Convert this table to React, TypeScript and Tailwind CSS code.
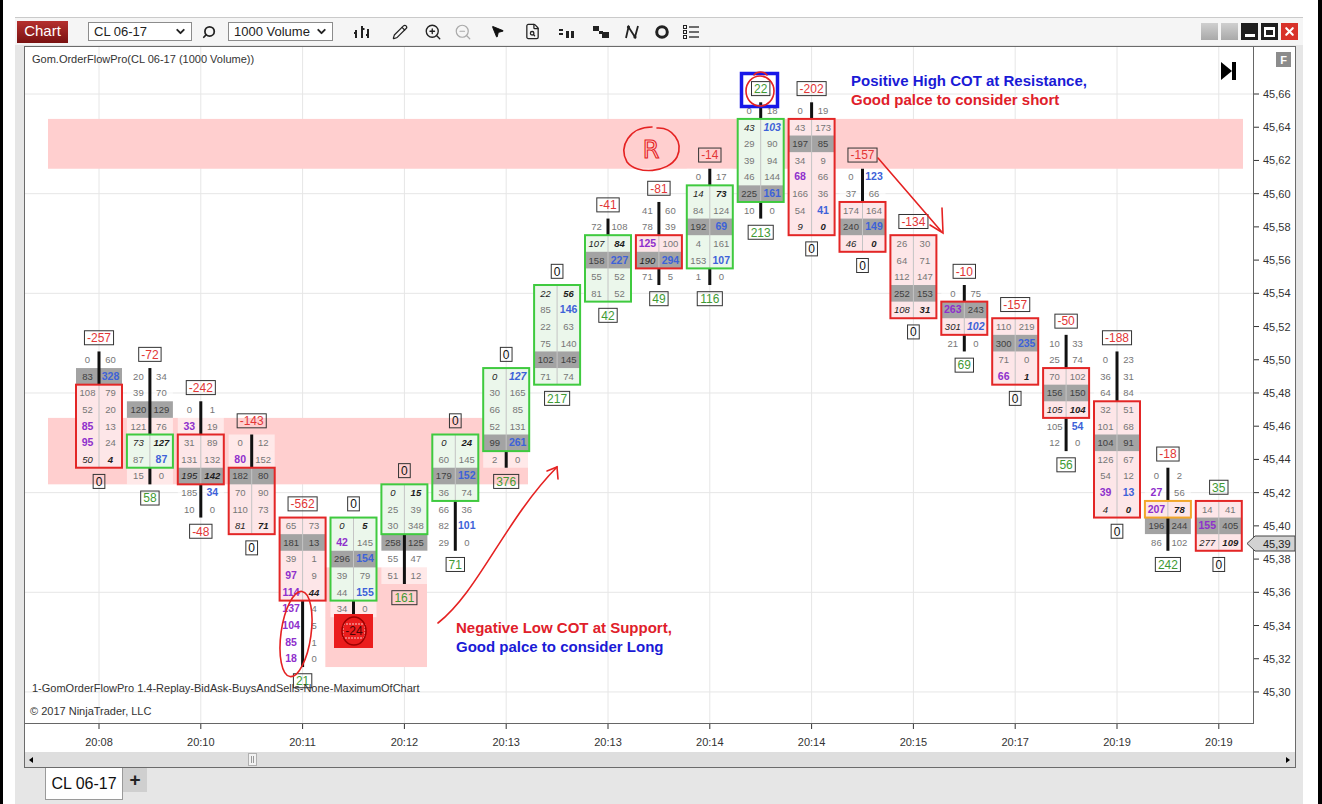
import React from 'react';
import { Search, Pencil, ZoomIn, ZoomOut, MousePointer2, FileSearch, ChevronDown, X } from 'lucide-react';

const FONT = '"Liberation Sans", Arial, sans-serif';
const Y0 = 94;
const STEP = 16.61;
const ry = (t: number) => Y0 + t * STEP;
const cx = (i: number) => 99 + i * 50.9;

type Candle = { t: number; rows: string[]; b: [number, number]; k: 'r' | 'g' | 'o'; top: string; bot: string };

// rows: '#' = grey (POC) row, '^' purple, '~' blue, '*' italic
const candles: Candle[] = [
  { t: 16, top: '-257', bot: '0', k: 'r', b: [2, 6], rows: ['0 60', '#83 ~328', '108 79', '52 20', '^85 13', '^95 24', '*50 *4'] },
  { t: 17, top: '-72', bot: '58', k: 'g', b: [4, 5], rows: ['20 34', '39 70', '#120 129', '121 76', '*73 *127', '87 ~87', '15 0'] },
  { t: 19, top: '-242', bot: '-48', k: 'r', b: [2, 4], rows: ['0 1', '^33 19', '31 89', '131 132', '#*195 *142', '185 ~34', '10 0'] },
  { t: 21, top: '-143', bot: '0', k: 'r', b: [2, 5], rows: ['0 12', '^80 152', '#182 80', '70 90', '110 73', '*81 *71'] },
  { t: 26, top: '-562', bot: '21', k: 'r', b: [0, 4], rows: ['65 73', '#181 13', '39 1', '^97 9', '^114 *44', '^137 4', '^104 5', '^85 1', '^18 0'] },
  { t: 26, top: '0', bot: '-24', k: 'g', b: [0, 4], rows: ['*0 *5', '^42 145', '#296 ~154', '39 79', '44 ~155', '34 0'] },
  { t: 24, top: '0', bot: '161', k: 'g', b: [0, 2], rows: ['*0 *15', '25 39', '30 348', '#258 125', '55 47', '51 12'] },
  { t: 21, top: '0', bot: '71', k: 'g', b: [0, 3], rows: ['*0 *24', '60 145', '#179 ~152', '36 74', '66 36', '82 ~101', '29 0'] },
  { t: 17, top: '0', bot: '376', k: 'g', b: [0, 4], rows: ['*0 ~*127', '30 165', '66 85', '52 131', '#99 ~261', '2 0'] },
  { t: 12, top: '0', bot: '217', k: 'g', b: [0, 5], rows: ['*22 *56', '85 ~146', '22 63', '75 140', '#102 145', '71 74'] },
  { t: 8, top: '-41', bot: '42', k: 'g', b: [1, 4], rows: ['72 108', '*107 *84', '#158 ~227', '55 52', '81 52'] },
  { t: 7, top: '-81', bot: '49', k: 'r', b: [2, 3], rows: ['41 60', '78 39', '^125 100', '#*190 ~294', '71 5'] },
  { t: 5, top: '-14', bot: '116', k: 'g', b: [1, 5], rows: ['0 17', '*14 *73', '84 124', '#192 ~69', '4 161', '153 ~107', '1 0'] },
  { t: 1, top: '22', bot: '213', k: 'g', b: [1, 5], rows: ['0 18', '*43 ~*103', '29 90', '39 94', '46 144', '#225 ~161', '10 0'] },
  { t: 1, top: '-202', bot: '0', k: 'r', b: [1, 7], rows: ['0 19', '43 173', '#197 85', '34 9', '^68 66', '166 36', '54 ~41', '*9 *0'] },
  { t: 5, top: '-157', bot: '0', k: 'r', b: [2, 4], rows: ['0 ~123', '37 66', '174 164', '#240 ~149', '*46 *0'] },
  { t: 9, top: '-134', bot: '0', k: 'r', b: [0, 4], rows: ['26 30', '64 71', '112 147', '#252 153', '*108 *31'] },
  { t: 12, top: '-10', bot: '69', k: 'r', b: [1, 2], rows: ['0 75', '#^263 243', '*301 ~*102', '21 0'] },
  { t: 14, top: '-157', bot: '0', k: 'r', b: [0, 3], rows: ['110 219', '#300 ~235', '71 0', '^66 *1'] },
  { t: 15, top: '-50', bot: '56', k: 'r', b: [2, 4], rows: ['10 33', '25 74', '70 102', '#156 150', '*105 *104', '105 ~54', '12 0'] },
  { t: 16, top: '-188', bot: '0', k: 'r', b: [3, 9], rows: ['0 23', '36 31', '64 84', '32 51', '101 68', '#104 91', '126 67', '54 12', '^39 ~13', '*4 *0'] },
  { t: 23, top: '-18', bot: '242', k: 'o', b: [2, 2], rows: ['0 2', '^27 56', '^207 *78', '#196 244', '86 102'] },
  { t: 25, top: '35', bot: '0', k: 'r', b: [0, 2], rows: ['14 41', '#^155 405', '*277 *109'] },
];

const times = ['20:08', '20:10', '20:11', '20:12', '20:13', '20:13', '20:14', '20:14', '20:15', '20:17', '20:19', '20:19'];

type Tok = { v: string; purple: boolean; blue: boolean; ital: boolean };

function parseTok(s: string): Tok {
  let i = 0;
  const t = { v: '', purple: false, blue: false, ital: false };
  while (i < s.length && '^~*'.includes(s[i])) {
    if (s[i] === '^') t.purple = true;
    if (s[i] === '~') t.blue = true;
    if (s[i] === '*') t.ital = true;
    i++;
  }
  t.v = s.slice(i);
  return t;
}

function parseRow(r: string) {
  const gray = r.startsWith('#');
  const [a, b] = (gray ? r.slice(1) : r).split(' ');
  return { gray, a: parseTok(a), b: parseTok(b) };
}

function CellText({ tok, x, y, gray, right }: { tok: Tok; x: number; y: number; gray: boolean; right: boolean }) {
  let fill = gray ? '#3f3f3f' : '#767676';
  let weight: 'normal' | 'bold' = 'normal';
  let size = 9.5;
  if (tok.ital) {
    fill = '#1d1d1d';
    if (right) weight = 'bold';
  }
  if (tok.purple) {
    fill = '#8f30cc';
    weight = 'bold';
    size = 10.5;
  }
  if (tok.blue) {
    fill = '#3d62d8';
    weight = 'bold';
    size = 10.5;
  }
  return (
    <text x={x} y={y + 3.4} fontSize={size} fontWeight={weight} fontStyle={tok.ital ? 'italic' : 'normal'} fill={fill} textAnchor="middle">
      {tok.v}
    </text>
  );
}

function Label({ x, y, v }: { x: number; y: number; v: string }) {
  const w = [...v].reduce((s, ch) => s + (ch === '-' ? 4 : 6.7), 0) + 5;
  const color = v.startsWith('-') ? '#e23636' : v === '0' ? '#111' : '#3f9a34';
  return (
    <g>
      <rect x={x - w / 2} y={y - 7} width={w} height={14} fill="none" stroke="#333" strokeWidth={1} />
      <text x={x} y={y + 4.3} fontSize={12} fill={color} textAnchor="middle">
        {v}
      </text>
    </g>
  );
}

function CandleView({ c, i }: { c: Candle; i: number }) {
  const x = cx(i);
  const rows = c.rows.map(parseRow);
  const n = rows.length;
  const h = STEP / 2;
  const yTop = ry(c.t) - h;
  const yBot = ry(c.t + n - 1) + h;
  const bTop = ry(c.t + c.b[0]) - h;
  const bBot = ry(c.t + c.b[1]) + h;
  const stroke = c.k === 'r' ? '#e32626' : c.k === 'g' ? '#3fca3f' : '#f2a62a';
  const bodyFill = c.k === 'g' ? '#ebf7eb' : '#fde6e8';
  const inBody = (j: number) => j >= c.b[0] && j <= c.b[1];
  return (
    <g>
      {rows.map((r, j) =>
        inBody(j) ? null : (
          <rect key={j} x={x - 23} y={ry(c.t + j) - h} width={46} height={STEP} fill={r.gray ? '#a3a3a3' : 'rgba(255,255,255,0.55)'} />
        )
      )}
      <rect x={x - 1.5} y={yTop} width={3} height={yBot - yTop} fill="#111" />
      <rect x={x - 23} y={bTop} width={46} height={bBot - bTop} fill={bodyFill} />
      {rows.map((r, j) =>
        inBody(j) && r.gray ? <rect key={j} x={x - 23} y={ry(c.t + j) - h} width={46} height={STEP} fill="#a3a3a3" /> : null
      )}
      <line x1={x} x2={x} y1={bTop} y2={bBot} stroke="#c4c4c4" strokeWidth={1} />
      {rows.map((r, j) => (
        <g key={j}>
          <CellText tok={r.a} x={x - 11.5} y={ry(c.t + j)} gray={r.gray} right={false} />
          <CellText tok={r.b} x={x + 11.5} y={ry(c.t + j)} gray={r.gray} right />
        </g>
      ))}
      <rect x={x - 23} y={bTop} width={46} height={bBot - bTop} fill="none" stroke={stroke} strokeWidth={2} />
      <Label x={x} y={ry(c.t) - 22} v={c.top} />
      <Label x={x} y={ry(c.t + n - 1) + 22} v={c.bot} />
    </g>
  );
}

function PlotSvg() {
  const priceTicks = Array.from({ length: 19 }, (_, k) => k * 2);
  return (
    <svg width={1270} height={677} className="block" fontFamily={FONT}>
      <g transform="translate(-25 -47)">
        {[0, 6, 12, 18, 24, 30, 36].map((t) => (
          <line key={t} x1={25} x2={1253} y1={ry(t)} y2={ry(t)} stroke="#e6e6e6" />
        ))}
        {times.map((_, k) => (
          <line key={k} x1={cx(k * 2)} x2={cx(k * 2)} y1={47} y2={724} stroke="#e6e6e6" />
        ))}
        <rect x={48} y={ry(1.5)} width={1195} height={STEP * 3} fill="#ffcfcf" />
        <rect x={48} y={ry(19.5)} width={480} height={STEP * 4} fill="#ffcfcf" />
        <rect x={325} y={ry(28.5)} width={102} height={STEP * 6} fill="#ffcfcf" />

        {candles.map((c, i) => (
          <CandleView key={i} c={c} i={i} />
        ))}

        <text x={32} y={63} fontSize={11} fill="#333">Gom.OrderFlowPro(CL 06-17 (1000 Volume))</text>
        <text x={32} y={692} fontSize={11} fill="#333">1-GomOrderFlowPro 1.4-Replay-BidAsk-BuysAndSells-None-MaximumOfChart</text>
        <text x={30} y={715} fontSize={11} fill="#333">© 2017 NinjaTrader, LLC</text>

        <polygon points="1221,62 1232,71 1221,80" fill="#000" />
        <rect x={1232} y={62} width={4} height={18} fill="#000" />

        {/* annotations */}
        <rect x={741.5} y={73.5} width={36} height={33} fill="none" stroke="#1717e8" strokeWidth={3.5} />
        <g fill="none" stroke="#e52222" strokeWidth={1.6} strokeLinecap="round">
          <ellipse cx={760} cy={91} rx={14} ry={15} />
          <path d="M754 75 C 757 71 764 71 767 75" />
          <path d="M652 127 C 630 127 618 146 627 162 C 637 175 668 173 677 157 C 684 142 672 127 657 128" />
          <ellipse cx={296} cy={634} rx={15} ry={43} transform="rotate(8 296 634)" />
          <path d="M438 623 C 478 592 505 520 557 467" />
          <path d="M547 471 L557 467 L558 479" />
          <path d="M878 158 L941 231" />
          <path d="M942 208 L943 233 L930 225" />
        </g>
        <text x={651} y={158} fontSize={24} fill="none" stroke="#e52222" strokeWidth={1.1} textAnchor="middle" fontFamily="'DejaVu Sans', sans-serif">
          R
        </text>
        <rect x={334} y={614} width={39} height={34} fill="#eb1d1d" />
        <rect x={343} y={624} width={22} height={14} fill="none" stroke="#f6c9c9" strokeDasharray="2 1" />
        <text x={354} y={635.3} fontSize={12} fill="#4a0505" textAnchor="middle">-24</text>
        <ellipse cx={354} cy={631} rx={12} ry={14} fill="none" stroke="#9c0000" strokeWidth={1.5} />

        <text x={851} y={86} fontSize={15} fontWeight="bold" fill="#1a1ad6">Positive High COT at Resistance,</text>
        <text x={851} y={105} fontSize={15} fontWeight="bold" fill="#e0202a">Good palce to consider short</text>
        <text x={456} y={633} fontSize={15} fontWeight="bold" fill="#e0202a">Negative Low COT at Support,</text>
        <text x={456} y={652} fontSize={15} fontWeight="bold" fill="#1a1ad6">Good palce to consider Long</text>

        {/* plot border */}
        <line x1={1253.5} x2={1253.5} y1={47} y2={724} stroke="#666" />
        <line x1={25} x2={1254} y1={723.5} y2={723.5} stroke="#666" />

        {/* price axis */}
        <rect x={1276} y={52} width={15} height={15} fill="#8c8c8c" />
        <text x={1283.5} y={63.5} fontSize={11} fontWeight="bold" fill="#fff" textAnchor="middle">F</text>
        {priceTicks.map((t) => (
          <g key={t}>
            <line x1={1254} x2={1259} y1={ry(t)} y2={ry(t)} stroke="#333" />
            <text x={1263} y={ry(t) + 4} fontSize={11} fill="#333">
              45,{String(66 - t).padStart(2, '0')}
            </text>
          </g>
        ))}
        <polygon points="1247,543.5 1255,536 1295,536 1295,551 1255,551" fill="#d2d2d2" stroke="#444" />
        <text x={1263} y={547.5} fontSize={11} fill="#222">45,39</text>
      </g>
    </svg>
  );
}

function TimeAxis() {
  return (
    <svg width={1270} height={28} className="block" fontFamily={FONT}>
      <g transform="translate(-25 0)">
        {times.map((t, k) => (
          <g key={k}>
            <line x1={cx(k * 2)} x2={cx(k * 2)} y1={0} y2={5} stroke="#333" />
            <text x={cx(k * 2)} y={22} fontSize={11} fill="#333" textAnchor="middle">
              {t}
            </text>
          </g>
        ))}
      </g>
    </svg>
  );
}

const BarsIcon = () => (
  <svg width={18} height={16} viewBox="0 0 18 16">
    <path d="M3 6v8M1 9h2M9 2v12M9 5h2.5M15 5v9M13 11h2" stroke="#222" strokeWidth={2} fill="none" />
  </svg>
);
const DomIcon = () => (
  <svg width={18} height={16} viewBox="0 0 18 16">
    <path d="M1 6h4M1 10h4" stroke="#222" strokeWidth={2} />
    <rect x={8} y={7} width={3} height={7} fill="#222" />
    <rect x={13} y={7} width={3} height={7} fill="#222" />
  </svg>
);
const BlocksIcon = () => (
  <svg width={18} height={16} viewBox="0 0 18 16">
    <rect x={1} y={2} width={6} height={5} fill="#222" />
    <rect x={7} y={7} width={4} height={3} fill="#222" />
    <rect x={10} y={8} width={7} height={6} fill="#222" />
  </svg>
);
const LineIcon = () => (
  <svg width={18} height={16} viewBox="0 0 18 16">
    <path d="M3 14L5.5 3L12 13L15 2" stroke="#222" strokeWidth={1.8} fill="none" />
    <circle cx={5.5} cy={3} r={1.6} fill="#222" />
    <circle cx={12} cy={13} r={1.6} fill="#222" />
  </svg>
);
const RingIcon = () => (
  <svg width={18} height={16} viewBox="0 0 18 16">
    <circle cx={9} cy={8} r={5.3} stroke="#222" strokeWidth={3} fill="none" />
  </svg>
);
const ListIcon = () => (
  <svg width={18} height={16} viewBox="0 0 18 16">
    {[2, 7, 12].map((y) => (
      <g key={y}>
        <rect x={1.5} y={y - 0.5} width={3} height={3} fill="none" stroke="#222" strokeWidth={1} />
        <path d={`M7 ${y + 1}h10`} stroke="#222" strokeWidth={1.3} />
      </g>
    ))}
  </svg>
);

const tools = [
  { el: <BarsIcon />, ml: 'ml-[19px]' },
  { el: <Pencil size={16} strokeWidth={1.8} color="#222" />, ml: 'ml-[18px]' },
  { el: <ZoomIn size={18} strokeWidth={1.8} color="#222" />, ml: 'ml-[13px]' },
  { el: <ZoomOut size={18} strokeWidth={1.6} color="#aaa" />, ml: 'ml-[10px]' },
  { el: <MousePointer2 size={15} strokeWidth={1.5} color="#111" fill="#111" />, ml: 'ml-[14px]' },
  { el: <FileSearch size={17} strokeWidth={1.8} color="#222" />, ml: 'ml-[15px]' },
  { el: <DomIcon />, ml: 'ml-[15px]' },
  { el: <BlocksIcon />, ml: 'ml-[14px]' },
  { el: <LineIcon />, ml: 'ml-[11px]' },
  { el: <RingIcon />, ml: 'ml-[10px]' },
  { el: <ListIcon />, ml: 'ml-[9px]' },
];

function Toolbar() {
  return (
    <div className="h-[28px] flex items-center bg-[#f5f5f5] border-t border-[#cacaca]">
      <div className="ml-[2px] w-[51px] h-[22px] bg-gradient-to-b from-[#b5302e] to-[#7a1212] text-white text-[15px] flex items-center justify-center">
        Chart
      </div>
      <div className="ml-[20px] w-[104px] h-[19px] border border-[#8c8c8c] bg-white flex items-center justify-between pl-[5px] pr-[4px] text-[13px] text-[#222]">
        CL 06-17
        <ChevronDown size={13} strokeWidth={3.5} color="#222" />
      </div>
      <Search size={14} strokeWidth={3} color="#222" className="ml-[10px] -scale-x-100" />
      <div className="ml-[12px] w-[105px] h-[19px] border border-[#8c8c8c] bg-white flex items-center justify-between pl-[5px] pr-[4px] text-[13px] text-[#222]">
        1000 Volume
        <ChevronDown size={13} strokeWidth={3.5} color="#222" />
      </div>
      {tools.map((t, i) => (
        <div key={i} className={`${t.ml} w-[20px] h-[20px] flex items-center justify-center`}>
          {t.el}
        </div>
      ))}
      <div className="flex-1" />
      <div className="flex items-center gap-[3px] mr-[5px]">
        <div className="w-[17px] h-[17px] bg-gradient-to-b from-[#cfcfcf] to-[#a9a9a9]" />
        <div className="w-[17px] h-[17px] bg-gradient-to-b from-[#cfcfcf] to-[#a9a9a9]" />
        <div className="w-[17px] h-[17px] bg-[#1e1e1e] flex items-end justify-center pb-[3px]">
          <div className="w-[10px] h-[3px] bg-white" />
        </div>
        <div className="w-[17px] h-[17px] bg-[#1e1e1e] flex items-center justify-center">
          <div className="w-[11px] h-[10px] border-2 border-t-[3px] border-white" />
        </div>
        <div className="w-[17px] h-[17px] bg-[#d8322a] flex items-center justify-center">
          <X size={13} strokeWidth={4} color="#fff" />
        </div>
      </div>
    </div>
  );
}

export default function App() {
  return (
    <div className="w-[1322px] h-[804px] bg-black flex pl-[3px] pr-[4px] overflow-hidden" style={{ fontFamily: FONT }}>
      <div className="flex-1 bg-white pt-[17px] pl-[12px] pr-[15px] flex flex-col">
        <div className="flex-1 bg-[#e6e6e6] flex flex-col">
          <Toolbar />
          <div className="mt-[1px] ml-[9px] w-[1272px] h-[722px] border border-[#6b6b6b] bg-white flex flex-col">
            <PlotSvg />
            <TimeAxis />
            <div className="h-[15px] bg-[#dedede] flex items-center">
              <div className="ml-[4px] w-0 h-0 border-y-[3px] border-y-transparent border-r-[4px] border-r-black" />
              <div className="ml-[215px] w-[9px] h-[13px] bg-[#f2f2f2] border border-[#b0b0b0] flex items-center justify-center gap-[1px]">
                <div className="w-[1px] h-[7px] bg-[#999]" />
                <div className="w-[1px] h-[7px] bg-[#999]" />
              </div>
              <div className="flex-1" />
              <div className="mr-[5px] w-0 h-0 border-y-[3px] border-y-transparent border-l-[4px] border-l-black" />
            </div>
          </div>
          <div className="flex items-start">
            <div className="ml-[30px] w-[78px] h-[32px] bg-white border border-t-0 border-[#9a9a9a] flex items-center justify-center text-[16px] text-[#111]">
              CL 06-17
            </div>
            <div className="w-[24px] h-[24px] bg-[#cfcfcf] flex items-center justify-center text-[19px] font-bold text-[#222]">
              +
            </div>
          </div>
        </div>
      </div>
    </div>
  );
}
